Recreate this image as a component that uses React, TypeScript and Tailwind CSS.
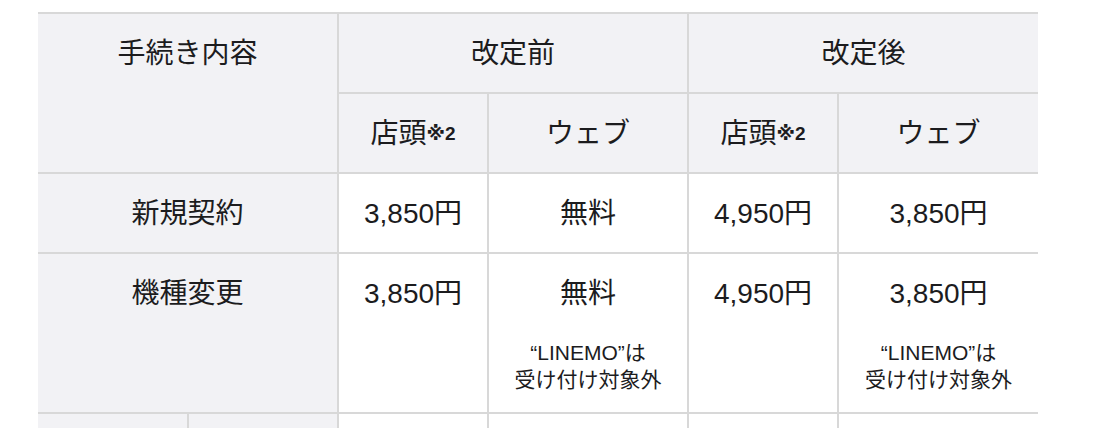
const font = { fontFamily: '"Liberation Sans", "Noto Sans CJK JP", sans-serif' };

function Store() {
  return (
    <>
      店頭
      <span className="relative -top-[3px] text-[19px] font-bold" style={{ fontFamily: '"DejaVu Sans", "Noto Sans CJK JP", sans-serif' }}>
        ※
      </span>
      <span className="relative -top-[3px] text-[19px] font-bold">2</span>
    </>
  );
}

function Note() {
  return (
    <p className="mt-[29px] text-[21px] leading-[27px]">
      “LINEMO”は
      <br />
      受け付け対象外
    </p>
  );
}

export default function App() {
  const head = "bg-[#f2f2f5] pt-[24px] text-center";
  const cell = "bg-white pt-[24px] text-center";

  return (
    <div className="h-[428px] overflow-hidden bg-white pt-[12px] pl-[38px]" style={font}>
      <div className="grid w-[1000px] grid-cols-[149px_148px_148px_198px_148px_199px] grid-rows-[78px_78px_78px_158px_14px] gap-[2px] bg-[#d8d8d8] pt-[2px] text-[28px] leading-[32px] text-[#1c1c1e]">
        <div className={`${head} col-span-2 row-span-2`}>手続き内容</div>
        <div className={`${head} col-span-2`}>改定前</div>
        <div className={`${head} col-span-2`}>改定後</div>

        <div className={head}>
          <Store />
        </div>
        <div className={head}>ウェブ</div>
        <div className={head}>
          <Store />
        </div>
        <div className={head}>ウェブ</div>

        <div className={`${head} col-span-2`}>新規契約</div>
        <div className={cell}>3,850円</div>
        <div className={cell}>無料</div>
        <div className={cell}>4,950円</div>
        <div className={cell}>3,850円</div>

        <div className={`${head} col-span-2`}>機種変更</div>
        <div className={cell}>3,850円</div>
        <div className={cell}>
          <p>無料</p>
          <Note />
        </div>
        <div className={cell}>4,950円</div>
        <div className={cell}>
          <p>3,850円</p>
          <Note />
        </div>

        <div className="bg-[#f2f2f5]"></div>
        <div className="bg-[#f2f2f5]"></div>
        <div className="bg-white"></div>
        <div className="bg-white"></div>
        <div className="bg-white"></div>
        <div className="bg-white"></div>
      </div>
    </div>
  );
}
